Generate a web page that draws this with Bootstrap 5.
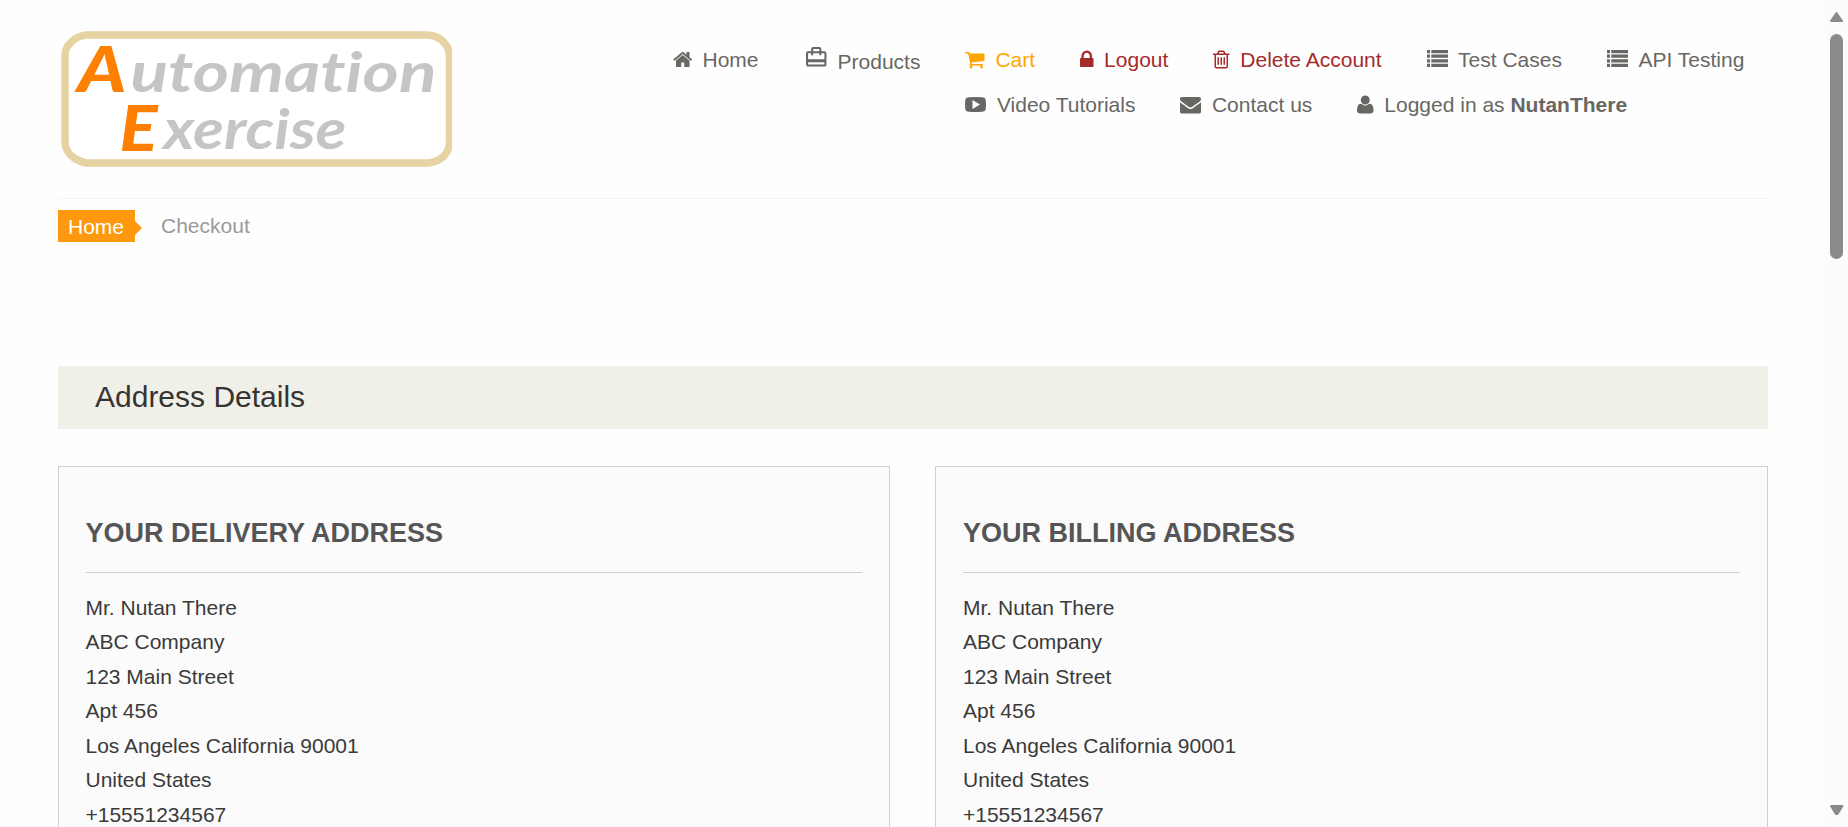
<!DOCTYPE html>
<html lang="en">
<head>
<meta charset="utf-8">
<meta name="viewport" content="width=device-width, initial-scale=1">
<title>Automation Exercise - Checkout</title>
<link rel="stylesheet" href="https://cdn.jsdelivr.net/npm/bootstrap@5.3.0/dist/css/bootstrap.min.css">
<style>
  html, body { height: 100%; overflow: hidden; }
  body { font-family: "Liberation Sans", Arial, sans-serif; font-size: 21px; line-height: 30px; color: #696763; background: #fefefe; }
  .page-wrap { height: 827px; padding-left: 57.5px; padding-right: 57.5px; }
  .site-head { height: 199px; border-bottom: 1px solid #f3f3f3; }
  .logo-box { padding-top: 30px; width: 615px; }
  .logo-box svg { display: block; }
  .logo-box text { font-variant-ligatures: none; }
  .main-menu { padding-top: 45px; }
  .main-menu a { display: flex; align-items: flex-start; height: 30px; color: #696763; text-decoration: none; white-space: nowrap; }
  .main-menu svg { fill: currentColor; height: 21px; margin: 4px 10.5px 0 0; flex: none; }
  .gap-menu { gap: 45px; }
  .row-menu { row-gap: 15px; }
  .main-menu a.cart-link { color: orange; }
  .main-menu a.danger-link { color: brown; }
  .main-menu a.products-link svg { height: 24.5px; margin: 0 9.5px 0 0; }
  .main-menu a.products-link span { padding-top: 2px; }
  .crumbs { height: 167px; padding-top: 11px; }
  .crumb-home { position: relative; height: 32px; width: 77px; padding: 2px 0 0 10.5px; background: #fe980f; color: #fff; text-decoration: none; }
  .crumb-home:hover { color: #fff; }
  .crumb-home::after { content: ""; position: absolute; left: 77px; top: 11px; border: 7px solid transparent; border-left-color: #fe980f; border-right: 0; }
  .crumb-now { color: #999; padding: 1px 0 0 26.5px; }
  .step-bar { height: 63px; background: #f0f0e9; padding-left: 37.5px; margin-bottom: 37px; }
  .step-bar h2 { font-size: 30px; line-height: 62px; font-weight: 400; color: #363432; margin: 0; }
  .address-grid { --bs-gutter-x: 45px; }
  .address-box { height: 400px; border: 1px solid #d0d0d0; background: #fbfbfb; padding: 0 27px; color: #3a3a3a; }
  .address-box h3 { font-size: 27px; font-weight: 700; line-height: 40px; color: #555; padding-top: 46px; height: 106px; margin: 0 0 17.5px; border-bottom: 1px solid #d0d0d0; }
  .address-box li { line-height: 34.5px; }
  .scroll-track { width: 23px; background: #fcfcfc; }
</style>
</head>
<body>
<div class="d-flex">
  <div class="page-wrap flex-grow-1 overflow-hidden">
    <header class="site-head d-flex">
      <a class="logo-box flex-shrink-0" href="#" aria-label="Automation Exercise">
        <svg width="394" height="139" viewBox="57.5 30 394 139">
          <path d="M86 35H428Q438 36 443.500 42.500Q449 48 449 57V142Q449 150 443.500 156Q437 162 428 163H86Q76 161 70 155Q64.500 149 64.500 142V56Q64.500 48 70 43Q76 36 86 35Z" fill="#fff" stroke="#e6d2a3" stroke-width="7.500"/>
          <g font-family="Lato, sans-serif" font-style="italic" font-weight="700">
            <text x="77" y="92" font-size="62" font-weight="900" fill="#ff7f00" textLength="49" lengthAdjust="spacingAndGlyphs">A</text>
            <text x="130" y="92" font-size="56" fill="#c5c5c5" textLength="306" lengthAdjust="spacingAndGlyphs">utomation</text>
            <text x="119" y="151" font-size="62" font-weight="900" fill="#ff7f00" textLength="38" lengthAdjust="spacingAndGlyphs">E</text>
            <text x="163" y="149" font-size="56" fill="#c5c5c5" textLength="183" lengthAdjust="spacingAndGlyphs">xercise</text>
          </g>
        </svg>
      </a>
      <nav class="main-menu gap-menu d-flex align-items-start flex-shrink-0">
        <div class="d-flex gap-menu">
          <a href="#"><svg width="19.5" viewBox="64 0 1664 1792"><path d="M1472 992v480q0 26-19 45t-45 19h-384v-384h-256v384h-384q-26 0-45-19t-19-45v-480q0-1 .5-3t.5-3l575-474 575 474q1 2 1 6zm223-69l-62 74q-8 9-21 11h-3q-13 0-21-7l-692-577-692 577q-12 8-24 7-13-2-21-11l-62-74q-8-10-7-23.500t11-21.500l719-599q32-26 76-26t76 26l244 204v-195q0-14 9-23t23-9h192q14 0 23 9t9 23v408l219 182q10 8 11 21.500t-7 23.500z"/></svg><span>Home</span></a>
          <a href="#" class="products-link"><svg width="24.5" viewBox="0 0 24 24"><path d="M20 6h-3V4c0-1.110-.890-2-2-2H9c-1.110 0-2 .890-2 2v2H4c-1.110 0-2 .890-2 2v11c0 1.110.890 2 2 2h16c1.110 0 2-.890 2-2V8c0-1.110-.890-2-2-2zM9 4h6v2H9V4zm11 15H4v-2h16v2zm0-5H4V8h3v2h2V8h6v2h2V8h3v6z"/></svg><span>Products</span></a>
        </div>
        <div class="d-flex flex-column row-menu">
          <div class="d-flex gap-menu">
            <a href="#" class="cart-link"><svg width="19.5" viewBox="64 0 1664 1792"><path d="M704 1536q0 52-38 90t-90 38-90-38-38-90 38-90 90-38 90 38 38 90zm896 0q0 52-38 90t-90 38-90-38-38-90 38-90 90-38 90 38 38 90zm128-1088v512q0 24-16.500 42.500t-40.500 21.500l-1044 122q13 60 13 70 0 16-24 64h920q26 0 45 19t19 45-19 45-45 19h-1024q-26 0-45-19t-19-45q0-11 8-31.500t16-36 21.500-40 15.500-29.500l-177-823h-204q-26 0-45-19t-19-45 19-45 45-19h256q16 0 28.500 6.500t19.500 15.500 13 24.500 8 26 5.500 29.500 4.500 26h1201q26 0 45 19t19 45z"/></svg><span>Cart</span></a>
            <a href="#" class="danger-link"><svg width="13.5" viewBox="320 0 1152 1792"><path d="M640 768h512v-192q0-106-75-181t-181-75-181 75-75 181v192zm832 96v576q0 40-28 68t-68 28h-960q-40 0-68-28t-28-68v-576q0-40 28-68t68-28h32v-192q0-184 132-316t316-132 316 132 132 316v192h32q40 0 68 28t28 68z"/></svg><span>Logout</span></a>
            <a href="#" class="danger-link"><svg width="16.5" viewBox="192 0 1408 1792"><path d="M704 736v576q0 14-9 23t-23 9h-64q-14 0-23-9t-9-23v-576q0-14 9-23t23-9h64q14 0 23 9t9 23zm256 0v576q0 14-9 23t-23 9h-64q-14 0-23-9t-9-23v-576q0-14 9-23t23-9h64q14 0 23 9t9 23zm256 0v576q0 14-9 23t-23 9h-64q-14 0-23-9t-9-23v-576q0-14 9-23t23-9h64q14 0 23 9t9 23zm128 724v-948h-896v948q0 22 7 40.500t14.500 27 10.500 8.500h832q3 0 10.500-8.500t14.500-27 7-40.500zm-672-1076h448l-48-117q-7-9-17-11h-317q-10 2-17 11zm928 32v64q0 14-9 23t-23 9h-96v948q0 83-47 143.500t-113 60.500h-832q-66 0-113-58.500t-47-141.500v-952h-96q-14 0-23-9t-9-23v-64q0-14 9-23t23-9h309l70-167q15-37 54-63t79-26h320q40 0 79 26t54 63l70 167h309q14 0 23 9t9 23z"/></svg><span>Delete Account</span></a>
            <a href="#"><svg width="21" viewBox="0 0 21 21"><path d="M0 1h3v3.200H0zM4.300 1H21v3.200H4.300zM0 5.600h3v3.200H0zM4.300 5.600H21v3.200H4.300zM0 10.200h3v3.200H0zM4.300 10.200H21v3.200H4.300zM0 14.800h3v3.200H0zM4.300 14.800H21v3.200H4.300z"/></svg><span>Test Cases</span></a>
            <a href="#"><svg width="21" viewBox="0 0 21 21"><path d="M0 1h3v3.200H0zM4.300 1H21v3.200H4.300zM0 5.600h3v3.200H0zM4.300 5.600H21v3.200H4.300zM0 10.200h3v3.200H0zM4.300 10.200H21v3.200H4.300zM0 14.800h3v3.200H0zM4.300 14.800H21v3.200H4.300z"/></svg><span>API Testing</span></a>
          </div>
          <div class="d-flex gap-menu">
            <a href="#"><svg width="21" viewBox="0 0 21 21"><path fill-rule="evenodd" d="M4 3.200Q10.500 2.600 17 3.200Q20.300 3.300 20.700 6Q21.200 10.500 20.700 15Q20.300 17.600 17 17.800Q10.500 18.300 4 17.800Q.7 17.600.3 15Q-.2 10.500.3 6Q.7 3.300 4 3.200ZM7.500 6V15L15 10.500Z"/></svg><span>Video Tutorials</span></a>
            <a href="#"><svg width="21" viewBox="0 0 1792 1792"><path d="M1792 710v794q0 66-47 113t-113 47h-1472q-66 0-113-47t-47-113v-794q44 49 101 87 362 246 497 345 57 42 92.500 65.500t94.500 48 110 24.500h2q51 0 110-24.500t94.500-48 92.500-65.500q170-123 498-345 57-39 100-87zm0-294q0 79-49 151t-122 123q-376 261-468 325-10 7-42.500 31t-54 38.500-52 32.500-57.500 27-50 9h-2q-23 0-50-9t-57.500-27-52-32.500-54-38.500-42.500-31q-91-64-262-182.500t-205-142.500q-62-42-117-115.500t-55-136.500q0-78 41.500-130t118.500-52h1472q65 0 112.500 47t47.500 113z"/></svg><span>Contact us</span></a>
            <a href="#"><svg width="16.5" viewBox="192 0 1408 1792"><path d="M1600 1405q0 120-73 189.500t-194 69.500h-874q-121 0-194-69.500t-73-189.500q0-53 3.500-103.500t14-109 26.500-108.500 43-97.500 62-81 85.500-53.500 111.500-20q9 0 42 21.500t74.500 48 108 48 133.500 21.500 133.500-21.500 108-48 74.500-48 42-21.500q61 0 111.500 20t85.500 53.500 62 81 43 97.500 26.500 108.500 14 109 3.500 103.500zm-320-893q0 159-112.500 271.500t-271.500 112.500-271.500-112.500-112.500-271.500 112.500-271.500 271.500-112.500 271.500 112.500 112.500 271.500z"/></svg><span>Logged in as <b>NutanThere</b></span></a>
          </div>
        </div>
      </nav>
    </header>
    <div class="crumbs d-flex align-items-start">
      <a class="crumb-home" href="#">Home</a>
      <span class="crumb-now">Checkout</span>
    </div>
    <div class="step-bar"><h2>Address Details</h2></div>
    <div class="row address-grid">
      <div class="col-6">
        <section class="address-box">
          <h3>YOUR DELIVERY ADDRESS</h3>
          <ul class="list-unstyled mb-0">
            <li>Mr. Nutan There</li>
            <li>ABC Company</li>
            <li>123 Main Street</li>
            <li>Apt 456</li>
            <li>Los Angeles California 90001</li>
            <li>United States</li>
            <li>+15551234567</li>
          </ul>
        </section>
      </div>
      <div class="col-6">
        <section class="address-box">
          <h3>YOUR BILLING ADDRESS</h3>
          <ul class="list-unstyled mb-0">
            <li>Mr. Nutan There</li>
            <li>ABC Company</li>
            <li>123 Main Street</li>
            <li>Apt 456</li>
            <li>Los Angeles California 90001</li>
            <li>United States</li>
            <li>+15551234567</li>
          </ul>
        </section>
      </div>
    </div>
  </div>
  <div class="scroll-track flex-shrink-0">
    <svg class="d-block" width="23" height="827" fill="#8b8b8b" stroke="#8b8b8b" stroke-linejoin="round">
      <path d="M11.500 13L17 21H6Z" stroke-width="2"/>
      <rect x="5" y="34" width="13" height="225" rx="6.500" stroke="none"/>
      <path d="M6 806H17.500L12.500 814H11Z" stroke-width="2"/>
    </svg>
  </div>
</div>
<script src="https://cdn.jsdelivr.net/npm/bootstrap@5.3.0/dist/js/bootstrap.bundle.min.js"></script>
</body>
</html>
